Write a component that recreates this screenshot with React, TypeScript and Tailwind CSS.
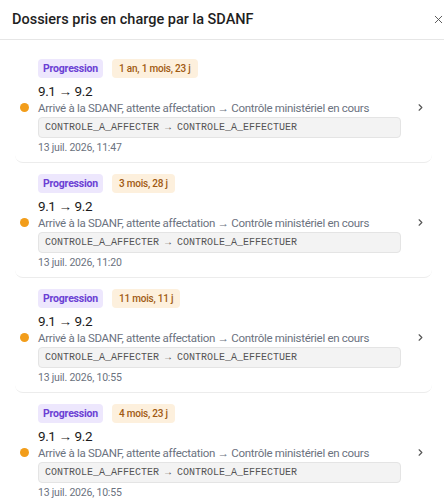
import { X, ChevronRight } from "lucide-react";

type Dossier = {
  duree: string;
  etapes: string;
  libelle: string;
  code: string;
  date: string;
};

const dossiers: Dossier[] = [
  {
    duree: "1 an, 1 mois, 23 j",
    etapes: "9.1 → 9.2",
    libelle: "Arrivé à la SDANF, attente affectation → Contrôle ministériel en cours",
    code: "CONTROLE_A_AFFECTER → CONTROLE_A_EFFECTUER",
    date: "13 juil. 2026, 11:47",
  },
  {
    duree: "3 mois, 28 j",
    etapes: "9.1 → 9.2",
    libelle: "Arrivé à la SDANF, attente affectation → Contrôle ministériel en cours",
    code: "CONTROLE_A_AFFECTER → CONTROLE_A_EFFECTUER",
    date: "13 juil. 2026, 11:20",
  },
  {
    duree: "11 mois, 11 j",
    etapes: "9.1 → 9.2",
    libelle: "Arrivé à la SDANF, attente affectation → Contrôle ministériel en cours",
    code: "CONTROLE_A_AFFECTER → CONTROLE_A_EFFECTUER",
    date: "13 juil. 2026, 10:55",
  },
  {
    duree: "4 mois, 23 j",
    etapes: "9.1 → 9.2",
    libelle: "Arrivé à la SDANF, attente affectation → Contrôle ministériel en cours",
    code: "CONTROLE_A_AFFECTER → CONTROLE_A_EFFECTUER",
    date: "13 juil. 2026, 10:55",
  },
];

function DossierRow({ d }: { d: Dossier }) {
  return (
    <button className="w-full flex items-center text-left rounded-lg border-b border-[#ececec] pl-[5px] pr-[6px] pt-[11px] pb-[6px]">
      <span className="w-[9px] h-[9px] rounded-full bg-[#f29d1a] shrink-0" />
      <div className="flex-1 min-w-0 ml-[9px]">
        <div className="flex items-center gap-[9px]">
          <span className="rounded bg-[#ede7fd] text-[#6b3fd4] text-[10.5px] font-bold tracking-[-0.2px] px-[5px] h-[19px] leading-[19px]">
            Progression
          </span>
          <span className="rounded bg-[#fdf0dd] text-[#a05a12] text-[10px] font-medium tracking-[-0.2px] px-[7px] h-[19px] leading-[19px]">
            {d.duree}
          </span>
        </div>
        <div className="mt-[4px] text-[13.5px] tracking-[-0.4px] leading-[18px] text-[#1a1a1a]">{d.etapes}</div>
        <div className="text-[11.5px] tracking-[-0.3px] leading-[16px] text-[#6b7280] whitespace-nowrap">
          {d.libelle}
        </div>
        <div
          className="mt-[1px] mr-[14px] rounded border border-[#e4e4e4] bg-[#f3f3f3] px-[6px] h-[21px] leading-[19px] text-[10px] text-[#555]"
          style={{ fontFamily: "'Liberation Mono', monospace" }}
        >
          {d.code}
        </div>
        <div className="mt-[2px] text-[10.5px] tracking-[-0.2px] leading-[16px] text-[#6b7280]">{d.date}</div>
      </div>
      <ChevronRight className="w-[11px] h-[11px] text-[#555] shrink-0" strokeWidth={2.5} />
    </button>
  );
}

export default function App() {
  return (
    <div
      className="w-[444px] h-[500px] bg-white overflow-hidden flex flex-col"
      style={{ fontFamily: "Roboto, sans-serif" }}
    >
      <div className="h-[40px] shrink-0 flex items-center justify-between border-b border-[#e6e6e6] pl-[12px]">
        <h2 className="text-[14.5px] font-medium text-[#1f1f1f]">Dossiers pris en charge par la SDANF</h2>
        <X className="w-[13px] h-[13px] text-[#555] -mr-[1px]" strokeWidth={1.75} />
      </div>
      <div className="flex flex-col pl-[15px] pr-[12px] pt-[8px]">
        {dossiers.map((d, i) => (
          <DossierRow key={i} d={d} />
        ))}
      </div>
    </div>
  );
}
